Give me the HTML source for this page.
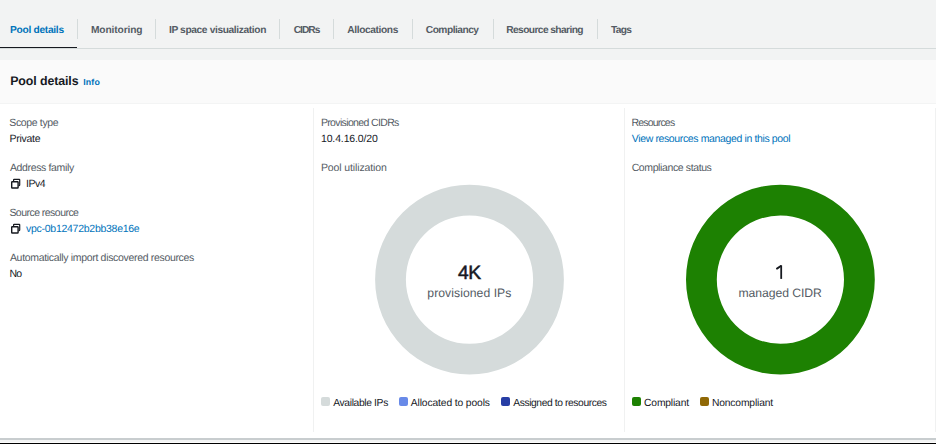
<!DOCTYPE html>
<html><head><meta charset="utf-8"><style>
html,body{margin:0;padding:0;}
body{width:936px;height:444px;overflow:hidden;position:relative;background:#f2f3f3;font-family:"Liberation Sans",sans-serif;text-rendering:geometricPrecision;}
.t{position:absolute;white-space:nowrap;line-height:1.2;}
</style></head><body>
<div style="position:absolute;left:0;top:48px;width:936px;height:1px;background:#d5dbdb"></div>
<div style="position:absolute;left:0;top:46.9px;width:77.3px;height:1.6px;background:#16191f"></div>
<div style="position:absolute;left:0;top:60px;width:936px;height:44px;background:#fafafa"></div>
<div style="position:absolute;left:0;top:103px;width:936px;height:1px;background:#f3f4f4"></div>
<div style="position:absolute;left:0;top:104px;width:936px;height:334px;background:#ffffff"></div>
<div style="position:absolute;left:0;top:438px;width:936px;height:2px;background:#c8cdcf"></div>
<div style="position:absolute;left:0;top:442px;width:936px;height:1px;background:#fbfbfb"></div>
<div style="position:absolute;left:0;top:443px;width:936px;height:1px;background:#000"></div>
<div style="position:absolute;left:313px;top:108px;width:1px;height:324px;background:#f0f1f1"></div>
<div style="position:absolute;left:624px;top:108px;width:1px;height:324px;background:#f0f1f1"></div>
<div style="position:absolute;left:935px;top:108px;width:1px;height:324px;background:#f0f1f1"></div>
<div style="position:absolute;left:77px;top:19px;width:1px;height:20px;background:#d5dbdb"></div>
<div style="position:absolute;left:155px;top:19px;width:1px;height:20px;background:#d5dbdb"></div>
<div style="position:absolute;left:279px;top:19px;width:1px;height:20px;background:#d5dbdb"></div>
<div style="position:absolute;left:333px;top:19px;width:1px;height:20px;background:#d5dbdb"></div>
<div style="position:absolute;left:412px;top:19px;width:1px;height:20px;background:#d5dbdb"></div>
<div style="position:absolute;left:493px;top:19px;width:1px;height:20px;background:#d5dbdb"></div>
<div style="position:absolute;left:597px;top:19px;width:1px;height:20px;background:#d5dbdb"></div>
<svg style="position:absolute;left:0;top:0" width="936" height="444"><path fill-rule="evenodd" fill="#d5dbdb" d="M375.1 279.6a94.4 94.9 0 1 0 188.8 0a94.4 94.9 0 1 0 -188.8 0ZM405.9 279.6a63.6 64.2 0 1 0 127.2 0a63.6 64.2 0 1 0 -127.2 0Z"/></svg>
<svg style="position:absolute;left:0;top:0" width="936" height="444"><path fill-rule="evenodd" fill="#1d8102" d="M686.0 279.6a94.4 94.9 0 1 0 188.8 0a94.4 94.9 0 1 0 -188.8 0ZM716.8 279.6a63.6 64.2 0 1 0 127.2 0a63.6 64.2 0 1 0 -127.2 0Z"/></svg>
<svg style="position:absolute;left:9.5px;top:177.5px" width="12" height="12" viewBox="0 0 12 12"><rect x="1.7" y="3.7" width="6.4" height="6.3" rx="0.5" fill="none" stroke="#16191f" stroke-width="1.4"/><path d="M3.6 3.2V1.8Q3.6 1.3 4.1 1.3H9.2Q9.7 1.3 9.7 1.8V7.1Q9.7 7.6 9.2 7.6H8.6" fill="none" stroke="#16191f" stroke-width="1.2"/></svg>
<svg style="position:absolute;left:9.5px;top:222.5px" width="12" height="12" viewBox="0 0 12 12"><rect x="1.7" y="3.7" width="6.4" height="6.3" rx="0.5" fill="none" stroke="#16191f" stroke-width="1.4"/><path d="M3.6 3.2V1.8Q3.6 1.3 4.1 1.3H9.2Q9.7 1.3 9.7 1.8V7.1Q9.7 7.6 9.2 7.6H8.6" fill="none" stroke="#16191f" stroke-width="1.2"/></svg>
<div style="position:absolute;left:321.2px;top:397.3px;width:9.1px;height:9.1px;border-radius:2px;background:#d5dbdb"></div>
<div style="position:absolute;left:399px;top:397.3px;width:9.1px;height:9.1px;border-radius:2px;background:#688ae8"></div>
<div style="position:absolute;left:501px;top:397.3px;width:9.1px;height:9.1px;border-radius:2px;background:#273ea5"></div>
<div style="position:absolute;left:632px;top:397.3px;width:9.1px;height:9.1px;border-radius:2px;background:#1d8102"></div>
<div style="position:absolute;left:700.4px;top:397.3px;width:9.1px;height:9.1px;border-radius:2px;background:#906806"></div>
<svg style="position:absolute;left:0;top:0" width="936" height="444"><path d="M777.0 268.6L780.8 266.0" stroke="#16191f" stroke-width="1.9" stroke-linecap="round" fill="none"/><path d="M781.2 265.4V278.9" stroke="#16191f" stroke-width="1.8" fill="none"/></svg>
<div class="t" style="left:10.07px;top:25.00px;font-size:10.2px;font-weight:700;color:#0073bb;letter-spacing:-0.290px">Pool details</div>
<div class="t" style="left:90.92px;top:25.00px;font-size:10.2px;font-weight:700;color:#545b64;letter-spacing:-0.109px">Monitoring</div>
<div class="t" style="left:168.96px;top:25.00px;font-size:10.2px;font-weight:700;color:#545b64;letter-spacing:-0.368px">IP space visualization</div>
<div class="t" style="left:293.64px;top:25.00px;font-size:10.2px;font-weight:700;color:#545b64;letter-spacing:-0.943px">CIDRs</div>
<div class="t" style="left:347.36px;top:25.00px;font-size:10.2px;font-weight:700;color:#545b64;letter-spacing:-0.392px">Allocations</div>
<div class="t" style="left:425.79px;top:25.00px;font-size:10.2px;font-weight:700;color:#545b64;letter-spacing:-0.504px">Compliancy</div>
<div class="t" style="left:506.26px;top:25.00px;font-size:10.2px;font-weight:700;color:#545b64;letter-spacing:-0.588px">Resource sharing</div>
<div class="t" style="left:611.03px;top:25.00px;font-size:10.2px;font-weight:700;color:#545b64;letter-spacing:-0.685px">Tags</div>
<div class="t" style="left:10.21px;top:74.01px;font-size:12.4px;font-weight:700;color:#16191f;letter-spacing:-0.109px">Pool details</div>
<div class="t" style="left:83.31px;top:77.00px;font-size:8.8px;font-weight:700;color:#0073bb;letter-spacing:0.117px">Info</div>
<div class="t" style="left:9.32px;top:117.00px;font-size:10.5px;font-weight:400;color:#545b64;letter-spacing:-0.361px">Scope type</div>
<div class="t" style="left:9.48px;top:133.00px;font-size:10.5px;font-weight:400;color:#16191f;letter-spacing:-0.263px">Private</div>
<div class="t" style="left:9.92px;top:162.00px;font-size:10.5px;font-weight:400;color:#545b64;letter-spacing:-0.355px">Address family</div>
<div class="t" style="left:26.08px;top:178.00px;font-size:10.5px;font-weight:400;color:#16191f;letter-spacing:-0.480px">IPv4</div>
<div class="t" style="left:9.41px;top:207.00px;font-size:10.5px;font-weight:400;color:#545b64;letter-spacing:-0.535px">Source resource</div>
<div class="t" style="left:26.06px;top:223.00px;font-size:10.5px;font-weight:400;color:#0073bb;letter-spacing:-0.274px">vpc-0b12472b2bb38e16e</div>
<div class="t" style="left:9.95px;top:252.00px;font-size:10.5px;font-weight:400;color:#545b64;letter-spacing:-0.322px">Automatically import discovered resources</div>
<div class="t" style="left:9.61px;top:268.00px;font-size:10.5px;font-weight:400;color:#16191f;letter-spacing:-0.842px">No</div>
<div class="t" style="left:320.88px;top:117.00px;font-size:10.5px;font-weight:400;color:#545b64;letter-spacing:-0.639px">Provisioned CIDRs</div>
<div class="t" style="left:320.93px;top:133.00px;font-size:10.5px;font-weight:400;color:#16191f;letter-spacing:-0.129px">10.4.16.0/20</div>
<div class="t" style="left:320.93px;top:162.00px;font-size:10.5px;font-weight:400;color:#545b64;letter-spacing:-0.118px">Pool utilization</div>
<div class="t" style="left:631.44px;top:117.00px;font-size:10.5px;font-weight:400;color:#545b64;letter-spacing:-0.809px">Resources</div>
<div class="t" style="left:631.75px;top:133.00px;font-size:10.5px;font-weight:400;color:#0073bb;letter-spacing:-0.369px">View resources managed in this pool</div>
<div class="t" style="left:631.64px;top:162.00px;font-size:10.5px;font-weight:400;color:#545b64;letter-spacing:-0.383px">Compliance status</div>
<div class="t" style="left:458.06px;top:262.00px;font-size:19.3px;font-weight:400;color:#16191f;letter-spacing:-0.616px;-webkit-text-stroke:0.5px currentColor">4K</div>
<div class="t" style="left:427.32px;top:285.51px;font-size:12.2px;font-weight:400;color:#545b64;letter-spacing:0.053px">provisioned IPs</div>
<div class="t" style="left:738.54px;top:285.51px;font-size:12.2px;font-weight:400;color:#545b64;letter-spacing:-0.072px">managed CIDR</div>
<div class="t" style="left:333.21px;top:397.51px;font-size:10.3px;font-weight:400;color:#16191f;letter-spacing:-0.355px">Available IPs</div>
<div class="t" style="left:410.79px;top:397.51px;font-size:10.3px;font-weight:400;color:#16191f;letter-spacing:-0.124px">Allocated to pools</div>
<div class="t" style="left:513.19px;top:397.51px;font-size:10.3px;font-weight:400;color:#16191f;letter-spacing:-0.405px">Assigned to resources</div>
<div class="t" style="left:644.05px;top:397.51px;font-size:10.3px;font-weight:400;color:#16191f;letter-spacing:-0.165px">Compliant</div>
<div class="t" style="left:711.96px;top:397.51px;font-size:10.3px;font-weight:400;color:#16191f;letter-spacing:-0.158px">Noncompliant</div>
</body></html>
